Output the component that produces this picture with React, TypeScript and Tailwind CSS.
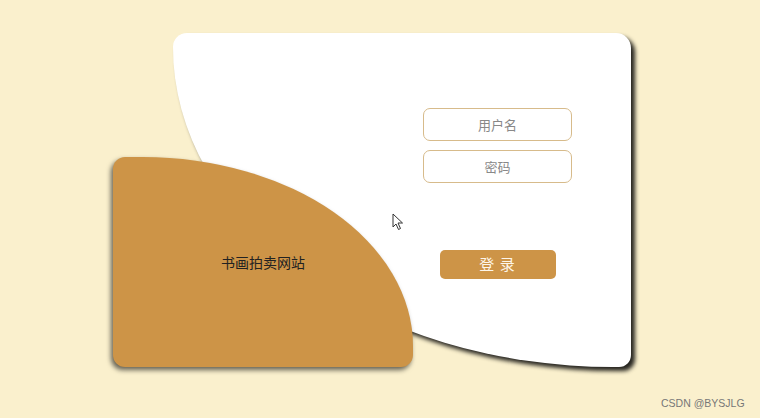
import React from "react";

const FONT = { fontFamily: '"Noto Sans CJK SC", "Noto Sans", sans-serif' };

function Cursor() {
  return (
    <svg width="12" height="18" viewBox="0 0 12 18" className="absolute left-[392px] top-[213px]">
      <path d="M1 1 L1 14 L4 11 L6.5 16.5 L8.5 15.5 L6 10 L10.5 10 Z" fill="#fff" stroke="#333" strokeWidth="1" strokeLinejoin="round" />
    </svg>
  );
}

export default function App() {
  return (
    <div className="relative h-[418px] w-full overflow-hidden bg-[#faf0cd]" style={FONT}>
      <div className="relative ml-[173px] pt-[33px]">
        <div className="flex h-[334px] w-[458px] rounded-[14px_15px_12px_440px/14px_15px_12px_320px] bg-white shadow-[4px_4px_4px_rgba(0,0,0,0.85)]">
          <div className="ml-[250px] flex w-[149px] flex-col items-center pt-[75px]">
            <input
              placeholder="用户名"
              className="h-[33px] w-[149px] rounded-[7px] border border-[#d7bb8b] bg-white text-center text-[13px] text-[#666] outline-none placeholder:text-[#888]"
            />
            <input
              placeholder="密码"
              className="mt-[9px] h-[33px] w-[149px] rounded-[7px] border border-[#d7bb8b] bg-white text-center text-[13px] text-[#666] outline-none placeholder:text-[#888]"
            />
            <button className="mt-[67px] h-[29px] w-[116px] rounded-[5px] bg-[#cd9447] text-[15px] tracking-[1px] text-[#fdf6ea]">
              登 录
            </button>
          </div>
        </div>
      </div>
      <div className="absolute left-[113px] top-[157px] flex h-[210px] w-[300px] items-center justify-center rounded-[12px_90%_12px_12px] bg-[#cd9447] shadow-[-2px_3px_5px_rgba(0,0,0,0.6)]">
        <span className="text-[14px] text-[#222]">书画拍卖网站</span>
      </div>
      <Cursor />
      <div className="absolute left-[661px] top-[396px] text-[10.5px] text-[#777]" style={{ fontFamily: '"Liberation Sans", Arial, sans-serif' }}>
        CSDN @BYSJLG
      </div>
    </div>
  );
}
